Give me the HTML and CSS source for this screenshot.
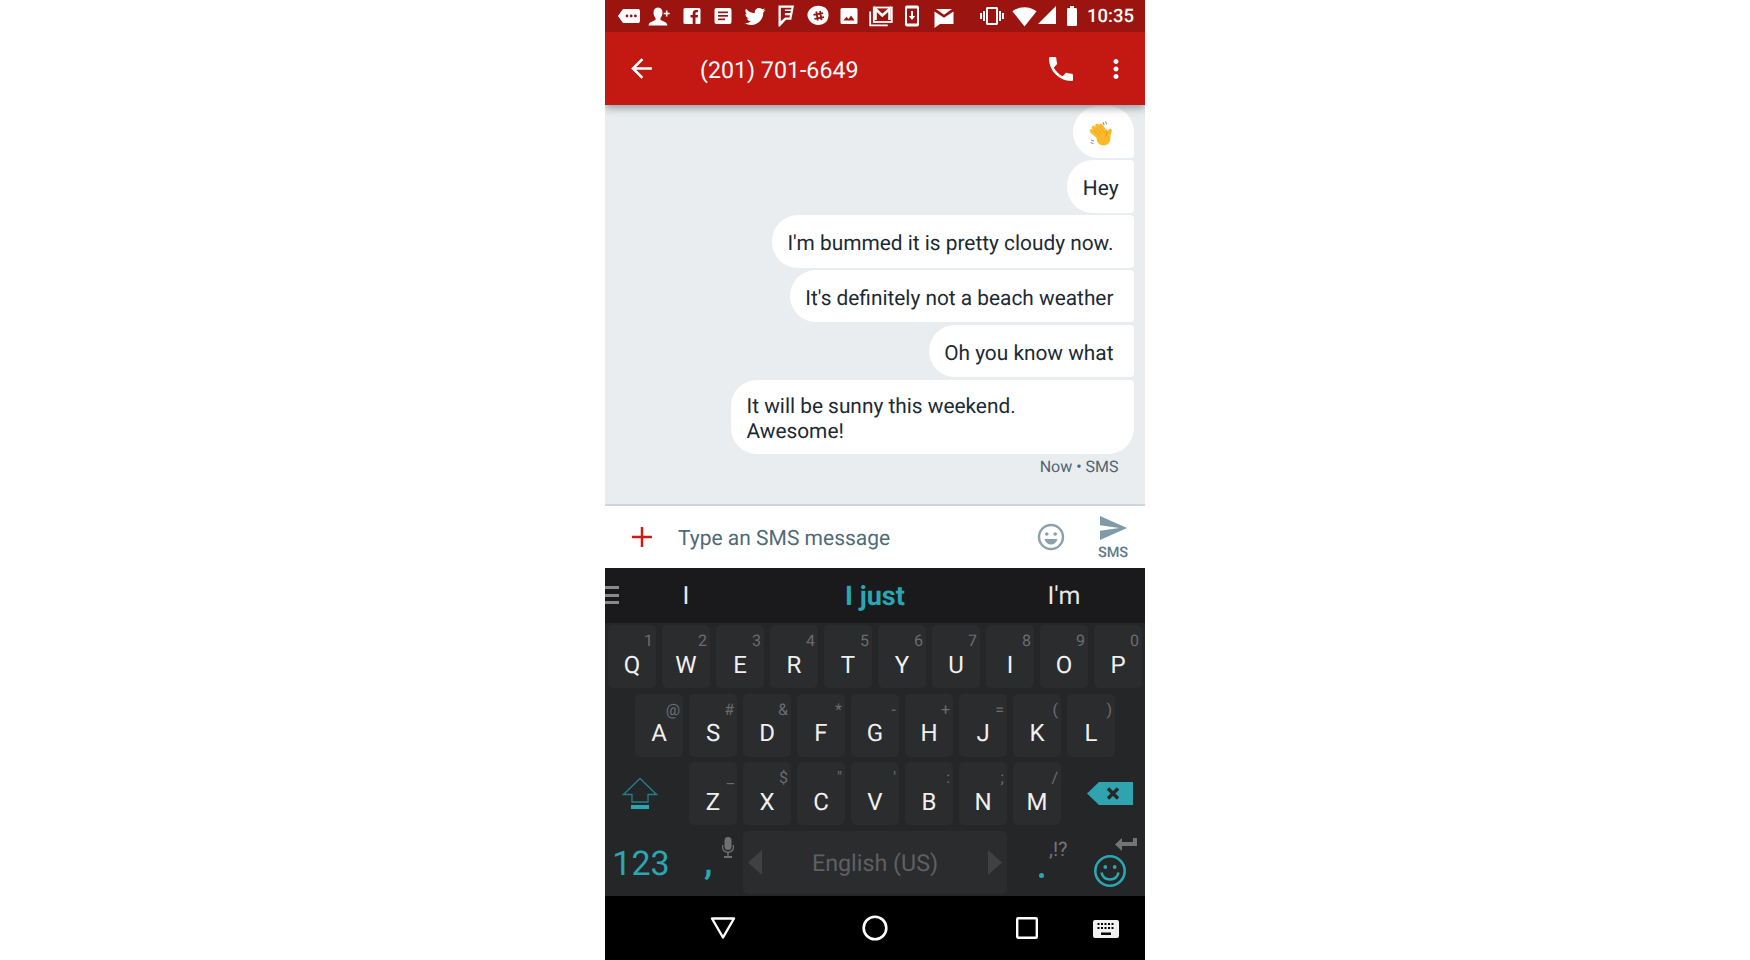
FILE: index.html
```html
<!DOCTYPE html>
<html lang="en">
<head>
    <meta charset="UTF-8">
    <title>Messages</title>
    <link rel="stylesheet" href="styles.css">
</head>
<body>
    <div class="phone">
        <div class="status-bar">
            <div class="status-left">
                <svg viewBox="0 0 24 24"><path class="w" d="M1 12 6 5h15a2 2 0 0 1 2 2v10a2 2 0 0 1-2 2H6z"/><circle class="cut" cx="10" cy="12" r="1.4"/><circle class="cut" cx="14.2" cy="12" r="1.4"/><circle class="cut" cx="18.4" cy="12" r="1.4"/></svg>
                <svg viewBox="0 0 24 24"><path class="w" d="M10 3.500c3 0 4.500 2.200 4.500 5 0 2.500-1 4.500-2 5.500v2c1.500 1 6.500 1.500 7 5.500H.5c.5-4 5.500-4.500 7-5.500v-2c-1-1-2-3-2-5.500 0-2.800 1.500-5 4.500-5z"/><path class="w" d="M19.500 6.500v2.200h2.200v1.600h-2.200v2.200h-1.600v-2.200h-2.200V8.700h2.200V6.500z"/></svg>
                <svg viewBox="0 0 24 24"><rect class="w" x="3.500" y="4" width="17" height="16" rx="1.500"/><path class="cut" d="M15.500 20v-6.500h2.200l.3-2.500h-2.500V9.500c0-.7.2-1.200 1.300-1.200H18V6.100c-.3 0-1-.1-2-.1-2 0-3.300 1.200-3.300 3.400V11h-2.200v2.500h2.200V20z"/></svg>
                <svg viewBox="0 0 24 24"><rect class="w" x="3.500" y="4" width="17" height="16" rx="2"/><rect class="cut" x="7" y="7.500" width="10" height="1.700"/><rect class="cut" x="7" y="11" width="10" height="1.700"/><rect class="cut" x="7" y="14.500" width="7" height="1.700"/></svg>
                <svg viewBox="0 0 24 24"><path class="w" d="M22.460 6c-.77.35-1.600.58-2.460.69.88-.53 1.560-1.370 1.880-2.380-.83.5-1.750.85-2.720 1.050C18.370 4.500 17.260 4 16 4c-2.350 0-4.270 1.920-4.270 4.290 0 .34.04.67.11.98C8.280 9.090 5.110 7.380 3 4.790c-.37.63-.58 1.370-.58 2.150 0 1.490.75 2.810 1.910 3.560-.71 0-1.370-.2-1.950-.5v.03c0 2.080 1.480 3.820 3.440 4.210a4.220 4.220 0 0 1-1.930.07 4.280 4.280 0 0 0 4 2.980 8.521 8.521 0 0 1-5.330 1.840c-.34 0-.68-.02-1.020-.06C3.440 20.290 5.700 21 8.120 21 16 21 20.330 14.460 20.330 8.790c0-.19 0-.37-.01-.56.84-.6 1.560-1.360 2.140-2.230z"/></svg>
                <svg class="raised" viewBox="0 0 24 24"><path class="w" d="M4.500 1.500H20l-2.700 14.300h-5.200L5.800 22.500H4.500z"/><path class="cut" d="M6.800 3.700v13.600l4.300-3.700h4.400l.4-2.300h-5V9h5.500l.4-2.100h-5.900V5.500h6.200l.3-1.800z"/></svg>
                <svg viewBox="0 0 24 24"><path class="w" d="M8 2.500c4-1.500 10.500-.5 13 3 2.500 3.500 1.800 10-1 12.500-3 2.800-8.500 4-12 2C3.800 18 1 13.800 1.500 10 1.900 7 5 3.600 8 2.500z"/><path class="hash" d="M10.300 7.500l1.500 9M14 7l1.500 9M7.500 10.800l9.500-1.600M8.500 14.800l9.500-1.600"/></svg>
                <svg viewBox="0 0 24 24"><rect class="w" x="3.500" y="4" width="17" height="16" rx="1.500"/><path class="cut" d="M6.500 16.500l3-3.800 2 2.300 2.600-3.500 3.400 5z"/></svg>
                <svg viewBox="0 0 24 24"><path class="line" d="M1.200 7.500v13.800h17.500"/><rect class="line" x="4.800" y="3.500" width="18" height="14.500"/><path class="line thick" d="M6.500 16V5l6.800 6.500L20.500 5v11"/></svg>
                <svg class="raised" viewBox="0 0 24 24"><rect class="w" x="5" y="1.500" width="14" height="21" rx="2"/><rect class="cut" x="7" y="4.500" width="10" height="15"/><path class="w" d="M11 7h2v5h2.200L12 16l-3.200-4H11z"/></svg>
                <svg class="lowered" viewBox="0 0 24 24"><path class="w" d="M2.500 6.500l9.500 6.300 9.500-6.300V19H8l-5.500 4z"/><path class="w" d="M4 4h16l-8 5.800z"/></svg>
            </div>
            <div class="status-right">
                <svg class="vibrate" viewBox="0 0 24 24"><path class="w" d="M0 15h2V9H0v6zm3 2h2V7H3v10zm19-8v6h2V9h-2zm-3 8h2V7h-2v10zM16.500 3h-9C6.670 3 6 3.670 6 4.500v15c0 .83.67 1.500 1.500 1.500h9c.83 0 1.500-.67 1.500-1.500v-15c0-.83-.67-1.500-1.500-1.500zM16 19H8V5h8v14z"/></svg>
                <svg class="wifi" viewBox="0 0 24 24"><path class="w" d="M12.010 21.490L23.640 7c-.45-.34-4.930-4-11.640-4C5.280 3 .81 6.660.36 7l11.640 14.500.01-.01z"/></svg>
                <svg class="cell" viewBox="0 0 20 20"><path class="w" d="M0 18h18V0z"/></svg>
                <svg class="battery" viewBox="0 0 24 24"><path class="w" d="M15.670 4H14V2h-4v2H8.330C7.600 4 7 4.600 7 5.330v15.330C7 21.400 7.600 22 8.330 22h7.330c.74 0 1.340-.6 1.340-1.330V5.330C17 4.600 16.400 4 15.670 4z"/></svg>
                <span class="clock">10:35</span>
            </div>
        </div>

        <div class="app-bar">
            <svg class="back-icon" viewBox="0 0 24 24"><path d="M20 11H7.830l5.590-5.590L12 4l-8 8 8 8 1.410-1.410L7.830 13H20v-2z"/></svg>
            <span class="title">(201) 701-6649</span>
            <svg class="call-icon" viewBox="0 0 24 24"><path d="M6.620 10.790c1.440 2.830 3.760 5.140 6.590 6.590l2.200-2.200c.27-.27.67-.36 1.020-.24 1.120.37 2.330.57 3.570.57.55 0 1 .45 1 1V20c0 .55-.45 1-1 1-9.390 0-17-7.610-17-17 0-.55.45-1 1-1h3.500c.55 0 1 .45 1 1 0 1.250.2 2.450.57 3.570.11.35.03.74-.25 1.020l-2.200 2.200z"/></svg>
            <svg class="more-icon" viewBox="0 0 24 24"><path d="M12 8c1.100 0 2-.9 2-2s-.9-2-2-2-2 .9-2 2 .9 2 2 2zm0 2c-1.100 0-2 .9-2 2s.9 2 2 2 2-.9 2-2-.9-2-2-2zm0 6c-1.100 0-2 .9-2 2s.9 2 2 2 2-.9 2-2-.9-2-2-2z"/></svg>
        </div>

        <div class="messages">
            <div class="bubble first wave-bubble">
                <svg class="wave" viewBox="0 0 28 28">
                    <path class="hand-lines" d="M16 2l1.200 3M18.500 1.500l1.200 3M4 20l3 1.200M3.500 22.500l3 1.200"/>
                    <path class="hand" d="M4.500 11 14 19M6.500 7.500 15 16M10 5.500 17 14M14 5.500 19 13M23 10.500 21 18"/>
                    <circle class="hand-fill" cx="16.500" cy="18.500" r="7"/>
                    <path class="hand-gap" d="M6.500 10 13 15.800M9 7.500 15 13.800M12.800 6.500 17.500 12.500"/>
                    <path class="hand-shade" d="M18.500 8.500c1.500 3 1 6-1 9 2.200-1.500 3.400-3.800 3.200-6.500z"/>
                </svg>
            </div>
            <div class="bubble">Hey</div>
            <div class="bubble long">I'm bummed it is pretty cloudy now.</div>
            <div class="bubble long">It's definitely not a beach weather</div>
            <div class="bubble long">Oh you know what</div>
            <div class="bubble last">It will be sunny this weekend.<br>Awesome!</div>
            <div class="meta">Now • SMS</div>
        </div>

        <div class="composer">
            <svg class="plus-icon" viewBox="0 0 20 20"><path d="M8.750 0h2.500v8.750H20v2.500h-8.750V20h-2.500v-8.750H0v-2.500h8.750z"/></svg>
            <span class="placeholder">Type an SMS message</span>
            <svg class="smile-icon" viewBox="0 0 28 28"><circle cx="14" cy="14" r="12" /><circle class="eye" cx="9.800" cy="11" r="1.800"/><circle class="eye" cx="18.200" cy="11" r="1.800"/><path class="mouth" d="M7.500 16h13c-.8 3.500-3.300 5.500-6.500 5.500S8.300 19.500 7.500 16z"/></svg>
            <div class="send">
                <svg viewBox="2 3 21 18" preserveAspectRatio="none"><path d="M2.010 21L23 12 2.010 3 2 10l15 2-15 2z"/></svg>
                <span>SMS</span>
            </div>
        </div>

        <div class="suggestions">
            <div class="menu-bars"><i></i><i></i><i></i></div>
            <span class="word">I</span>
            <span class="word picked">I just</span>
            <span class="word">I'm</span>
        </div>

        <div class="keyboard">
            <div class="row">
                <div class="key"><small>1</small>Q</div>
                <div class="key"><small>2</small>W</div>
                <div class="key"><small>3</small>E</div>
                <div class="key"><small>4</small>R</div>
                <div class="key"><small>5</small>T</div>
                <div class="key"><small>6</small>Y</div>
                <div class="key"><small>7</small>U</div>
                <div class="key"><small>8</small>I</div>
                <div class="key"><small>9</small>O</div>
                <div class="key"><small>0</small>P</div>
            </div>
            <div class="row row-home">
                <div class="key"><small>@</small>A</div>
                <div class="key"><small>#</small>S</div>
                <div class="key"><small>&amp;</small>D</div>
                <div class="key"><small>*</small>F</div>
                <div class="key"><small>-</small>G</div>
                <div class="key"><small>+</small>H</div>
                <div class="key"><small>=</small>J</div>
                <div class="key"><small>(</small>K</div>
                <div class="key"><small>)</small>L</div>
            </div>
            <div class="row">
                <div class="side-key">
                    <svg class="shift-icon" viewBox="0 0 36 34"><path class="shift-line" d="M1.500 17.500 18 1.500l16.500 16h-8.500v7.500H10v-7.500z"/><rect class="shift-bar" x="9" y="28" width="18" height="4"/></svg>
                </div>
                <div class="key"><small>_</small>Z</div>
                <div class="key"><small>$</small>X</div>
                <div class="key"><small>"</small>C</div>
                <div class="key"><small>'</small>V</div>
                <div class="key"><small>:</small>B</div>
                <div class="key"><small>;</small>N</div>
                <div class="key"><small>/</small>M</div>
                <div class="side-key">
                    <svg class="delete-icon" viewBox="0 0 46 23"><path class="teal" d="M0 11.500 12 0h34v23H12z"/><path class="x" d="M21 6.500l10 10M31 6.500l-10 10"/></svg>
                </div>
            </div>
            <div class="row row-bottom">
                <div class="side-key num-key">123</div>
                <div class="comma-key">
                    <svg class="mic-icon" viewBox="0 0 12 21"><rect x="2.500" y="0" width="7" height="13" rx="3.500"/><path d="M0 8h1.200v2c0 2.800 2 4.500 4.800 4.500s4.800-1.700 4.800-4.500V8H12v2.500c0 3-2 5-5.300 5.400V19H10v2H2v-2h3.300v-3.100C2 15.500 0 13.500 0 10.500z"/></svg>
                    <span>,</span>
                </div>
                <div class="space-key">
                    <svg viewBox="0 0 14 25"><path d="M14 0v25L0 12.500z"/></svg>
                    <span>English (US)</span>
                    <svg viewBox="0 0 14 25"><path d="M0 0v25l14-12.500z"/></svg>
                </div>
                <div class="period-key">
                    <small>,!?</small>
                    <i></i>
                </div>
                <div class="side-key enter-key">
                    <svg class="return-icon" viewBox="0 0 22 13"><path d="M22 0v8H7v5L0 6.500 7 0v4h11V0z"/></svg>
                    <svg class="emoji-icon" viewBox="0 0 32 32"><circle class="ring" cx="16" cy="16" r="14.700"/><circle class="dot" cx="11.300" cy="12" r="1.900"/><circle class="dot" cx="20.700" cy="12" r="1.900"/><path class="ring" d="M7.500 17.500c1 4.500 4.500 7 8.500 7s7.500-2.500 8.500-7"/></svg>
                </div>
            </div>
        </div>

        <div class="nav-bar">
            <svg class="nav-back" viewBox="0 0 26 24"><path d="M2 2.500h22L13 21.500z"/></svg>
            <svg class="nav-home" viewBox="0 0 26 26"><circle cx="13" cy="13" r="11.300"/></svg>
            <svg class="nav-recent" viewBox="0 0 22 22"><rect x="1.200" y="1.200" width="19.600" height="19.600" rx="1"/></svg>
            <svg class="nav-keyboard" viewBox="0 0 26 18">
                <path class="board" d="M2 0h22a2 2 0 0 1 2 2v14a2 2 0 0 1-2 2H2a2 2 0 0 1-2-2V2a2 2 0 0 1 2-2zm2.500 3v2h2V3zm3.500 0v2h2V3zm3.500 0v2h2V3zm3.500 0v2h2V3zm3.500 0v2h2V3zM4.500 7v2h2V7zM8 7v2h2V7zm3.500 0v2h2V7zM15 7v2h2V7zm3.500 0v2h2V7zM8 12.500v2.500h10v-2.500z"/>
            </svg>
        </div>
    </div>
</body>
</html>
```

FILE: styles.css
```css
body {
    margin: 0;
    background-color: #fff;
    font-family: Roboto, "Liberation Sans", sans-serif;
    text-rendering: geometricPrecision;
}

.phone {
    width: 540px;
    height: 960px;
    margin: 0 auto;
    display: flex;
    flex-direction: column;
    overflow: hidden;
}

/* status bar */
.status-bar {
    height: 32px;
    flex: none;
    display: flex;
    align-items: center;
    background-color: #9b1410;
    position: relative;
    z-index: 3;
}

.status-left {
    display: flex;
    align-items: center;
    padding-left: 8px;
}

.status-left svg {
    width: 24px;
    height: 24px;
    margin: 0 3.75px;
}

.status-left svg.raised {
    margin-top: -1px;
}

.status-left svg.lowered {
    margin-top: 2px;
}

.status-right {
    margin-left: auto;
    display: flex;
    align-items: center;
    padding-right: 11px;
}

.status-bar .w {
    fill: #fff;
}

.status-bar .cut {
    fill: #9b1410;
}

.status-bar .hash {
    fill: none;
    stroke: #9b1410;
    stroke-width: 1.8;
}

.status-bar .line {
    fill: none;
    stroke: #fff;
    stroke-width: 1.8;
}

.status-bar .line.thick {
    stroke-width: 2.6;
}

.vibrate {
    width: 24px;
    height: 24px;
}

.wifi {
    width: 25px;
    height: 25px;
    margin-left: 8px;
}

.cell {
    width: 20px;
    height: 20px;
    margin-left: 1px;
}

.battery {
    width: 24px;
    height: 24px;
    margin-left: 2px;
}

.clock {
    color: #fff;
    font-size: 18.5px;
    font-weight: 500;
    margin-left: 3px;
}

/* app bar */
.app-bar {
    height: 73px;
    flex: none;
    display: flex;
    align-items: center;
    padding: 0 14px 0 21px;
    background-color: #c41813;
    box-shadow: 0 3px 8px rgba(40, 50, 55, 0.45);
    position: relative;
    z-index: 2;
}

.app-bar svg {
    fill: #fff;
}

.back-icon {
    width: 31px;
    height: 31px;
}

.title {
    margin-left: 43px;
    padding-top: 2px;
    color: #fff;
    font-size: 23.2px;
}

.call-icon {
    width: 32px;
    height: 32px;
    margin-left: auto;
}

.more-icon {
    width: 30px;
    height: 30px;
    margin-left: 24px;
}

/* messages */
.messages {
    flex: 1;
    display: flex;
    flex-direction: column;
    align-items: flex-end;
    gap: 2.4px;
    padding: 0.7px 11px 0 0;
    background-color: #e9edf0;
}

.bubble {
    min-height: 52.4px;
    box-sizing: border-box;
    display: flex;
    align-items: center;
    padding: 15px 15.5px 9px;
    background-color: #fff;
    border-radius: 26px 4px 4px 26px;
    color: #1b2a33;
    font-size: 20.85px;
    line-height: 25px;
}

.bubble.long {
    padding-right: 20.5px;
}

.bubble.first {
    border-top-right-radius: 26px;
}

.bubble.last {
    display: block;
    width: 403px;
    border-radius: 26px 4px 26px 26px;
}

.wave-bubble {
    padding: 4px 19px 0 14px;
}

.wave {
    width: 28px;
    height: 28px;
}

.hand {
    fill: none;
    stroke: #fbb92b;
    stroke-width: 3.6;
    stroke-linecap: round;
}

.hand-fill {
    fill: #fbb92b;
}

.hand-gap {
    fill: none;
    stroke: #e59a1c;
    stroke-width: 0.6;
}

.hand-shade {
    fill: #e59a1c;
}

.hand-lines {
    fill: none;
    stroke: #7d8a91;
    stroke-width: 1;
}

.meta {
    margin: 0 15.5px 0 0;
    color: #4f6472;
    font-size: 16px;
    line-height: 21px;
}

/* composer */
.composer {
    height: 64px;
    flex: none;
    box-sizing: border-box;
    display: flex;
    align-items: center;
    padding-left: 27px;
    border-top: 2px solid #cfd6dc;
    background-color: #fff;
}

.plus-icon {
    width: 20px;
    height: 20px;
    fill: #cf1c14;
}

.placeholder {
    margin-left: 26px;
    padding-top: 3px;
    color: #4f6a78;
    font-size: 21px;
}

.smile-icon {
    width: 28px;
    height: 28px;
    margin-left: auto;
    fill: none;
    stroke: #8ba1ac;
    stroke-width: 2.4;
}

.smile-icon .eye,
.smile-icon .mouth {
    fill: #8ba1ac;
    stroke: none;
}

.send {
    width: 64px;
    margin: 2px 0 0 16px;
    display: flex;
    flex-direction: column;
    align-items: center;
}

.send svg {
    width: 27px;
    height: 24px;
    fill: #7f9aa8;
}

.send span {
    margin-top: 4px;
    color: #5f7a88;
    font-size: 14.5px;
    font-weight: 500;
}

/* suggestion strip */
.suggestions {
    height: 55px;
    flex: none;
    display: grid;
    grid-template-columns: 162px 216px 162px;
    align-items: center;
    background-color: #1a1a1c;
    position: relative;
}

.menu-bars {
    position: absolute;
    left: 0;
    top: 18px;
    width: 14px;
    display: flex;
    flex-direction: column;
    gap: 4.5px;
}

.menu-bars i {
    display: block;
    height: 3px;
    background-color: #8a8a8c;
}

.word {
    padding-top: 2px;
    text-align: center;
    color: #e8e8e8;
    font-size: 25px;
}

.word.picked {
    padding-top: 0;
    color: #2aa7b3;
    font-size: 27px;
    font-weight: 700;
}

/* keyboard */
.keyboard {
    height: 273px;
    flex: none;
    box-sizing: border-box;
    padding: 2px 0;
    display: flex;
    flex-direction: column;
    gap: 5.7px;
    background-color: #252628;
}

.row {
    height: 63px;
    display: flex;
    justify-content: center;
    gap: 6px;
}

.key {
    width: 48px;
    box-sizing: border-box;
    padding-top: 16.5px;
    display: flex;
    align-items: center;
    justify-content: center;
    background-color: #2b2c2e;
    border-radius: 5px;
    color: #f0f0f0;
    font-size: 24px;
    position: relative;
}

.key small {
    position: absolute;
    top: 6px;
    right: 3px;
    color: #6b6c6e;
    font-size: 16px;
    line-height: 20px;
}

.side-key {
    width: 78px;
    display: flex;
    align-items: center;
    justify-content: center;
    position: relative;
}

.shift-icon {
    width: 36px;
    height: 34px;
    margin: 0 0 0 -9px;
}

.shift-line {
    fill: none;
    stroke: #22808a;
    stroke-width: 1.3;
}

.shift-bar {
    fill: #2aa7b3;
}

.delete-icon {
    width: 46px;
    height: 23px;
    margin: 0 0 0 8px;
}

.delete-icon .teal {
    fill: #2fa3ae;
}

.delete-icon .x {
    fill: none;
    stroke: #25282a;
    stroke-width: 3.4;
}

.row-bottom {
    gap: 0;
}

.num-key {
    width: 81px;
    padding: 2px 9px 0 0;
    box-sizing: border-box;
    color: #2aa7b3;
    font-size: 34px;
}

.comma-key {
    width: 54px;
    position: relative;
    color: #2aa7b3;
    font-size: 38px;
    font-weight: 500;
}

.comma-key span {
    position: absolute;
    left: 18px;
    top: 9px;
}

.mic-icon {
    position: absolute;
    left: 36px;
    top: 6px;
    width: 12px;
    height: 21px;
    fill: #6f7072;
}

.space-key {
    width: 264px;
    margin: 0 3px;
    box-sizing: border-box;
    padding: 0 5px;
    display: flex;
    align-items: center;
    justify-content: space-between;
    background-color: #2b2c2e;
    border-radius: 5px;
    color: #5f6062;
    font-size: 23.3px;
}

.space-key svg {
    width: 14px;
    height: 25px;
    fill: #404143;
}

.period-key {
    width: 54px;
    position: relative;
}

.period-key small {
    position: absolute;
    left: 39px;
    top: 6px;
    color: #737476;
    font-size: 20px;
}

.period-key i {
    position: absolute;
    left: 29px;
    top: 42px;
    width: 5px;
    height: 5px;
    border-radius: 50%;
    background-color: #2aa7b3;
}

.enter-key {
    width: 81px;
}

.return-icon {
    position: absolute;
    right: 8px;
    top: 7px;
    width: 22px;
    height: 13px;
    fill: #737476;
}

.emoji-icon {
    position: absolute;
    right: 19px;
    top: 24px;
    width: 32px;
    height: 32px;
}

.emoji-icon .ring {
    fill: none;
    stroke: #2aa7b3;
    stroke-width: 2.6;
}

.emoji-icon .dot {
    fill: #2aa7b3;
}

/* nav bar */
.nav-bar {
    height: 64px;
    flex: none;
    position: relative;
    background-color: #000;
}

.nav-bar svg {
    position: absolute;
}

.nav-back {
    left: 105px;
    top: 20px;
    width: 26px;
    height: 24px;
    fill: none;
    stroke: #fff;
    stroke-width: 2.4;
    stroke-linejoin: round;
}

.nav-home {
    left: 257px;
    top: 19px;
    width: 26px;
    height: 26px;
    fill: none;
    stroke: #fff;
    stroke-width: 2.6;
}

.nav-recent {
    left: 411px;
    top: 21px;
    width: 22px;
    height: 22px;
    fill: none;
    stroke: #fff;
    stroke-width: 2.4;
}

.nav-keyboard {
    left: 488px;
    top: 24px;
    width: 26px;
    height: 18px;
}

.nav-keyboard .board {
    fill: #f0f0f0;
    fill-rule: evenodd;
}
```
